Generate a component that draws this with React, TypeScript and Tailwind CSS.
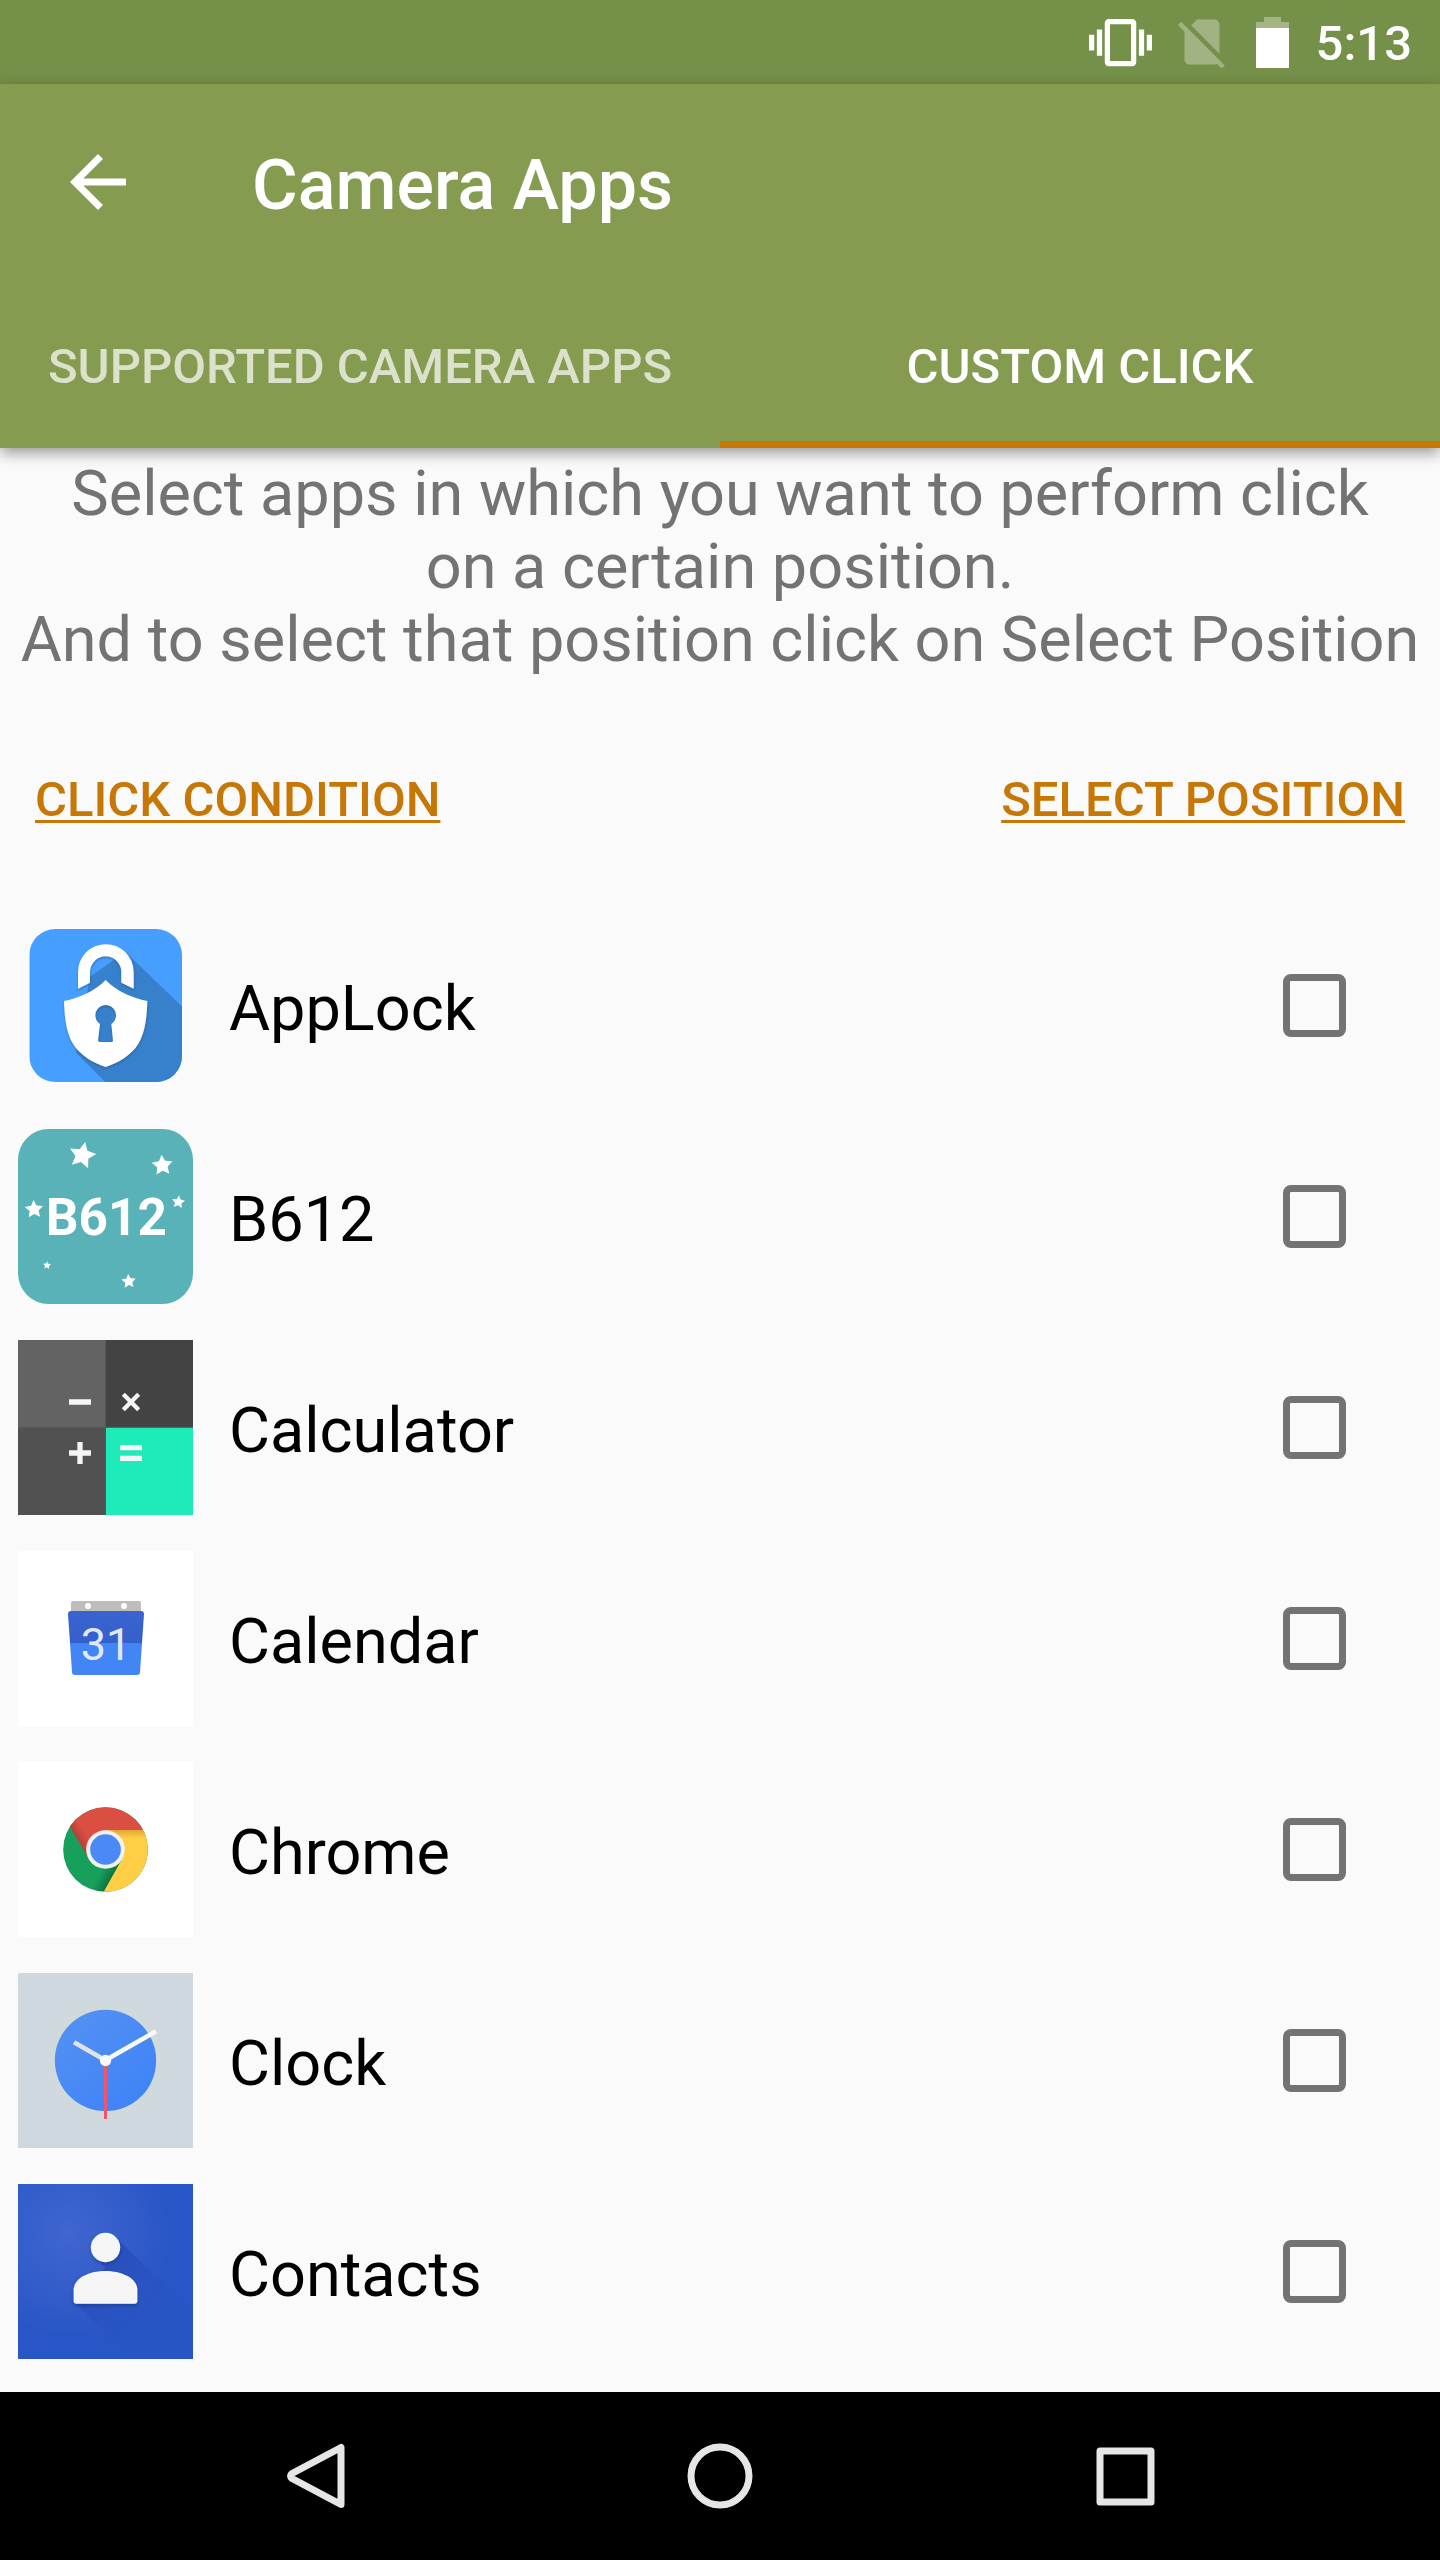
import { useState } from "react";
import type { ReactNode } from "react";

function Svg({ box, children }: { box: string; children: ReactNode }) {
  return (
    <svg viewBox={box} className="size-[175px] shrink-0" aria-hidden="true">
      {children}
    </svg>
  );
}

function Star({ x, y, r, turn = 0 }: { x: number; y: number; r: number; turn?: number }) {
  return (
    <path
      transform={`translate(${x} ${y}) rotate(${turn}) scale(${r})`}
      d="M0-1 .29-.4 .98-.31 .48.16 .61.83 0 .5-.61.83-.48.16-.98-.31-.29-.4Z"
      fill="#fff"
    />
  );
}

function AppLockIcon() {
  return (
    <Svg box="54 24 525 525">
      <defs>
        <clipPath id="lock-clip">
          <rect x="88" y="57" width="458" height="459" rx="78" />
        </clipPath>
        <filter id="lock-shadow" x="-10%" y="-10%" width="120%" height="120%">
          <feDropShadow dx="1" dy="4" stdDeviation="3" floodColor="#1d4f86" floodOpacity=".6" />
        </filter>
      </defs>
      <g clipPath="url(#lock-clip)">
        <rect x="88" y="57" width="458" height="459" fill="#469fff" />
        <path d="M376 125 560 303V530H330L228 428 270 200Z" fill="#3781cc" />
      </g>
      <g filter="url(#lock-shadow)" fill="#fff">
        <path d="M234 236V186a83 83 0 0 1 167 0V236L364 218V186a47 47 0 0 0-94 0V218Z" />
        <path
          fillRule="evenodd"
          d="M317 210C352 246 396 263 442 273C440 330 434 368 416 400C394 437 354 459 317 471C280 459 240 437 218 400C200 368 194 330 192 273C238 263 282 246 317 210ZM300 342 294 391Q294 396 299 396H335Q340 396 339 391L334 342A31 31 0 1 0 300 342Z"
        />
      </g>
    </Svg>
  );
}

function B612Icon() {
  return (
    <Svg box="54 27 525 525">
      <rect x="54" y="27" width="525" height="525" rx="92" fill="#59b2b7" />
      <Star x={247} y={106} r={41} turn={12} />
      <Star x={487} y={136} r={32} turn={-4} />
      <Star x={102} y={268} r={28} turn={-3} />
      <Star x={535} y={246} r={20} turn={6} />
      <Star x={141} y={436} r={12} turn={6} />
      <Star x={386} y={484} r={22} turn={-4} />
      <text
        x="319"
        y="346"
        textAnchor="middle"
        fill="#fff"
        fontFamily="Roboto, sans-serif"
        fontWeight="700"
        fontSize="154"
      >
        B612
      </text>
    </Svg>
  );
}

function CalculatorIcon() {
  return (
    <Svg box="54 30 525 525">
      <rect x="54" y="30" width="263" height="263" fill="#636363" />
      <rect x="317" y="30" width="262" height="263" fill="#434343" />
      <rect x="54" y="292" width="263" height="263" fill="#515151" />
      <rect x="317" y="292" width="262" height="263" fill="#1eebb9" />
      <path d="M316.500 30V555M54 292H579" stroke="#4f5a57" strokeWidth="3" fill="none" />
      <path
        d="M207 216h66M207 369h66M240 336v66M360 353h66M360 385h66"
        stroke="#f5f5f5"
        strokeWidth="16"
        fill="none"
      />
      <path d="M370 193l46 46M416 193l-46 46" stroke="#f5f5f5" strokeWidth="13" fill="none" />
    </Svg>
  );
}

function CalendarIcon() {
  return (
    <Svg box="0 0 175 175">
      <defs>
        <linearGradient id="cal-top" x1="0" y1="0" x2="0" y2="1">
          <stop offset="0" stopColor="#3a63cf" />
          <stop offset="1" stopColor="#3460cc" />
        </linearGradient>
      </defs>
      <rect width="175" height="175" fill="#fff" />
      <path d="M55 50H121Q123 50 123 52V64H53V52Q53 50 55 50Z" fill="#bdbdbd" />
      <circle cx="70" cy="55" r="3" fill="#fff" />
      <circle cx="106" cy="55" r="3" fill="#fff" />
      <path d="M53 60H123Q126 60 126 63L124 92H52L50 63Q50 60 53 60Z" fill="url(#cal-top)" />
      <path d="M52 92H124L122 121Q122 124 119 124H57Q54 124 54 121Z" fill="#4285f4" />
      <text x="88" y="109" textAnchor="middle" fontFamily="Roboto, sans-serif" fontSize="45" fill="#e1e8f8">
        31
      </text>
    </Svg>
  );
}

function ChromeIcon() {
  return (
    <Svg box="54 36 525 525">
      <defs>
        <clipPath id="chrome-clip">
          <circle cx="316.500" cy="298.500" r="127" />
        </clipPath>
        <linearGradient id="chrome-red" gradientUnits="userSpaceOnUse" x1="225" y1="280" x2="262" y2="258">
          <stop offset="0" stopColor="#a93830" />
          <stop offset="1" stopColor="#db4f43" />
        </linearGradient>
        <linearGradient id="chrome-yellow" gradientUnits="userSpaceOnUse" x1="0" y1="240" x2="0" y2="264">
          <stop offset="0" stopColor="#dda734" />
          <stop offset="1" stopColor="#ffce44" />
        </linearGradient>
        <linearGradient id="chrome-green" gradientUnits="userSpaceOnUse" x1="338" y1="384" x2="302" y2="364">
          <stop offset="0" stopColor="#0d7041" />
          <stop offset="1" stopColor="#17a05c" />
        </linearGradient>
      </defs>
      <rect x="54" y="36" width="525" height="525" fill="#fff" />
      <g clipPath="url(#chrome-clip)">
        <rect x="180" y="160" width="280" height="280" fill="url(#chrome-green)" />
        <path d="M316 240H460V440H303L366 327Z" fill="url(#chrome-yellow)" />
        <path d="M180 160H460V240H316L267 327L202 217Z" fill="url(#chrome-red)" />
      </g>
      <circle cx="316.500" cy="298.500" r="58" fill="#f1f1f1" />
      <circle cx="316.500" cy="298.500" r="46" fill="#4b8af4" />
    </Svg>
  );
}

function ClockIcon() {
  return (
    <Svg box="54 39 525 525">
      <defs>
        <linearGradient id="clock-face" x1=".15" y1=".1" x2=".8" y2=".9">
          <stop offset="0" stopColor="#5290f3" />
          <stop offset="1" stopColor="#4083f6" />
        </linearGradient>
      </defs>
      <rect x="54" y="39" width="525" height="525" fill="#cfd8de" />
      <circle cx="316" cy="301" r="176" fill="#d0d9dc" />
      <circle cx="316.500" cy="301.500" r="152" fill="url(#clock-face)" />
      <path d="M222 247 316 301" stroke="#e1e2e6" strokeWidth="14" />
      <path d="M316 301 468 214" stroke="#fafafa" strokeWidth="14" />
      <path d="M316.500 301V477" stroke="#f0566a" strokeWidth="9" />
      <circle cx="316.500" cy="301.500" r="17" fill="#fafafa" />
    </Svg>
  );
}

function ContactsIcon() {
  return (
    <Svg box="54 42 525 525">
      <defs>
        <radialGradient id="contacts-bg" gradientUnits="userSpaceOnUse" cx="205" cy="188" r="310">
          <stop offset="0" stopColor="#4066cf" />
          <stop offset="1" stopColor="#2956c6" />
        </radialGradient>
        <linearGradient id="contacts-cast" gradientUnits="userSpaceOnUse" x1="290" y1="270" x2="470" y2="460">
          <stop offset="0" stopColor="#274db8" />
          <stop offset="1" stopColor="#2853c2" stopOpacity=".2" />
        </linearGradient>
        <filter id="contacts-shadow" x="-15%" y="-15%" width="130%" height="130%">
          <feDropShadow dx="0" dy="5" stdDeviation="5" floodColor="#16348a" floodOpacity=".6" />
        </filter>
      </defs>
      <rect x="54" y="42" width="525" height="525" fill="url(#contacts-bg)" />
      <path d="M348 202 579 433V567H393L226 399 316 292 286 264Z" fill="url(#contacts-cast)" />
      <g fill="#f5f5f5" filter="url(#contacts-shadow)">
        <circle cx="316.500" cy="232.500" r="44" />
        <path d="M221 355C227 321 270 303 316 303S406 321 412 355V394Q412 401 405 401H228Q221 401 221 394Z" />
      </g>
    </Svg>
  );
}

const apps = [
  { name: "AppLock", Icon: AppLockIcon },
  { name: "B612", Icon: B612Icon },
  { name: "Calculator", Icon: CalculatorIcon },
  { name: "Calendar", Icon: CalendarIcon },
  { name: "Chrome", Icon: ChromeIcon },
  { name: "Clock", Icon: ClockIcon },
  { name: "Contacts", Icon: ContactsIcon },
];

function StatusBar() {
  return (
    <div className="flex h-[84px] items-center justify-end bg-[#759048] pr-7 text-white">
      <svg viewBox="0 0 24 24" className="size-[63px]" fill="currentColor" aria-label="Vibrate">
        <path d="M0 15h2V9H0v6zm3 2h2V7H3v10zm19-8v6h2V9h-2zm-3 8h2V7h-2v10zM16.500 3h-9C6.670 3 6 3.670 6 4.500v15c0 .83.67 1.500 1.500 1.500h9c.83 0 1.500-.67 1.500-1.500v-15c0-.83-.67-1.500-1.500-1.500zM16 19H8V5h8v14z" />
      </svg>
      <svg viewBox="0 0 24 24" className="ml-5 size-[60px]" fill="#a1b382" aria-label="No SIM">
        <path d="M18.990 5c0-1.100-.89-2-1.990-2h-7L7.660 5.340 19 16.680 18.990 5zM3.650 3.880L2.380 5.150 5 7.770V19c0 1.100.9 2 2 2h10.010c.35 0 .67-.1.96-.26l1.880 1.880 1.270-1.270L3.650 3.880z" />
      </svg>
      <svg viewBox="0 0 33 51" className="ml-6 h-[51px] w-[33px]" aria-label="Battery">
        <path d="M8 0H25V5H33V11H0V5H8Z" fill="#a3b583" />
        <path d="M0 11H33V51H0Z" fill="#fff" />
      </svg>
      <span className="ml-[27px] pt-1 text-[49px] leading-[58px] font-medium">5:13</span>
    </div>
  );
}

function Header() {
  const [active, setActive] = useState(1);
  const tabs = ["Supported Camera Apps", "Custom Click"];
  return (
    <header className="relative bg-[#859b50] text-white shadow-[0_5px_14px_rgba(0,0,0,0.4)]">
      <div className="flex h-[196px] items-center px-14">
        <button type="button" aria-label="Back" className="shrink-0">
          <svg viewBox="0 0 24 24" className="size-[84px]" fill="currentColor">
            <path d="M20 11H7.830l5.590-5.590L12 4l-8 8 8 8 1.410-1.410L7.830 13H20v-2z" />
          </svg>
        </button>
        <h1 className="ml-28 pt-1.5 text-[70px] leading-[82px] font-medium">Camera Apps</h1>
      </div>
      <div role="tablist" className="grid grid-cols-2">
        {tabs.map((tab, i) => (
          <button
            key={tab}
            type="button"
            role="tab"
            aria-selected={i === active}
            onClick={() => setActive(i)}
            className={`h-[168px] border-b-[7px] pt-3 text-[49px] leading-[58px] font-medium uppercase ${
              i === active ? "border-[#c67706] text-white" : "border-transparent text-white/70"
            }`}
          >
            {tab}
          </button>
        ))}
      </div>
    </header>
  );
}

function NavBar() {
  return (
    <nav className="flex h-[168px] items-center bg-black px-28 text-[#e6e6e6]">
      <button type="button" aria-label="Back" className="flex flex-1 justify-center">
        <svg viewBox="0 0 66 66" className="size-[66px]" fill="none" stroke="currentColor" strokeWidth="7" strokeLinejoin="round">
          <path d="M59 4.500V61.500L10 35.500Q7 33 10 30.500Z" />
        </svg>
      </button>
      <button type="button" aria-label="Home" className="flex flex-1 justify-center">
        <svg viewBox="0 0 66 66" className="size-[66px]" fill="none" stroke="currentColor" strokeWidth="7">
          <circle cx="33" cy="33" r="29" />
        </svg>
      </button>
      <button type="button" aria-label="Recent apps" className="flex flex-1 justify-center">
        <svg viewBox="0 0 66 66" className="size-[66px]" fill="none" stroke="currentColor" strokeWidth="7" strokeLinejoin="round">
          <rect x="8" y="8" width="51" height="51" />
        </svg>
      </button>
    </nav>
  );
}

export default function App() {
  return (
    <div className="flex min-h-screen flex-col bg-[#fafafa] font-[Roboto,sans-serif]">
      <StatusBar />
      <Header />
      <main className="flex-1">
        <p className="pt-[9px] text-center text-[63px] leading-[73px] text-[#737373]">
          Select apps in which you want to perform click
          <br />
          on a certain position.
          <br />
          And to select that position click on Select Position
        </p>
        <div className="mt-6 flex h-[200px] items-center justify-between px-[35px] text-[49px] leading-[58px] font-medium text-[#c67706]">
          <button type="button" className="uppercase underline decoration-[3px] underline-offset-4 [text-decoration-skip-ink:none]">
            Click condition
          </button>
          <button type="button" className="uppercase underline decoration-[3px] underline-offset-4 [text-decoration-skip-ink:none]">
            Select position
          </button>
        </div>
        <ul>
          {apps.map(({ name, Icon }) => (
            <li key={name}>
              <label className="flex items-center py-[18px] pr-[94px] pl-[18px]">
                <Icon />
                <span className="ml-9 flex-1 pt-1.5 text-[63px] leading-[74px] text-black">{name}</span>
                <input
                  type="checkbox"
                  className="size-[63px] appearance-none rounded-[8px] border-[7px] border-[#737373] checked:bg-[#c67706]"
                />
              </label>
            </li>
          ))}
        </ul>
      </main>
      <NavBar />
    </div>
  );
}
